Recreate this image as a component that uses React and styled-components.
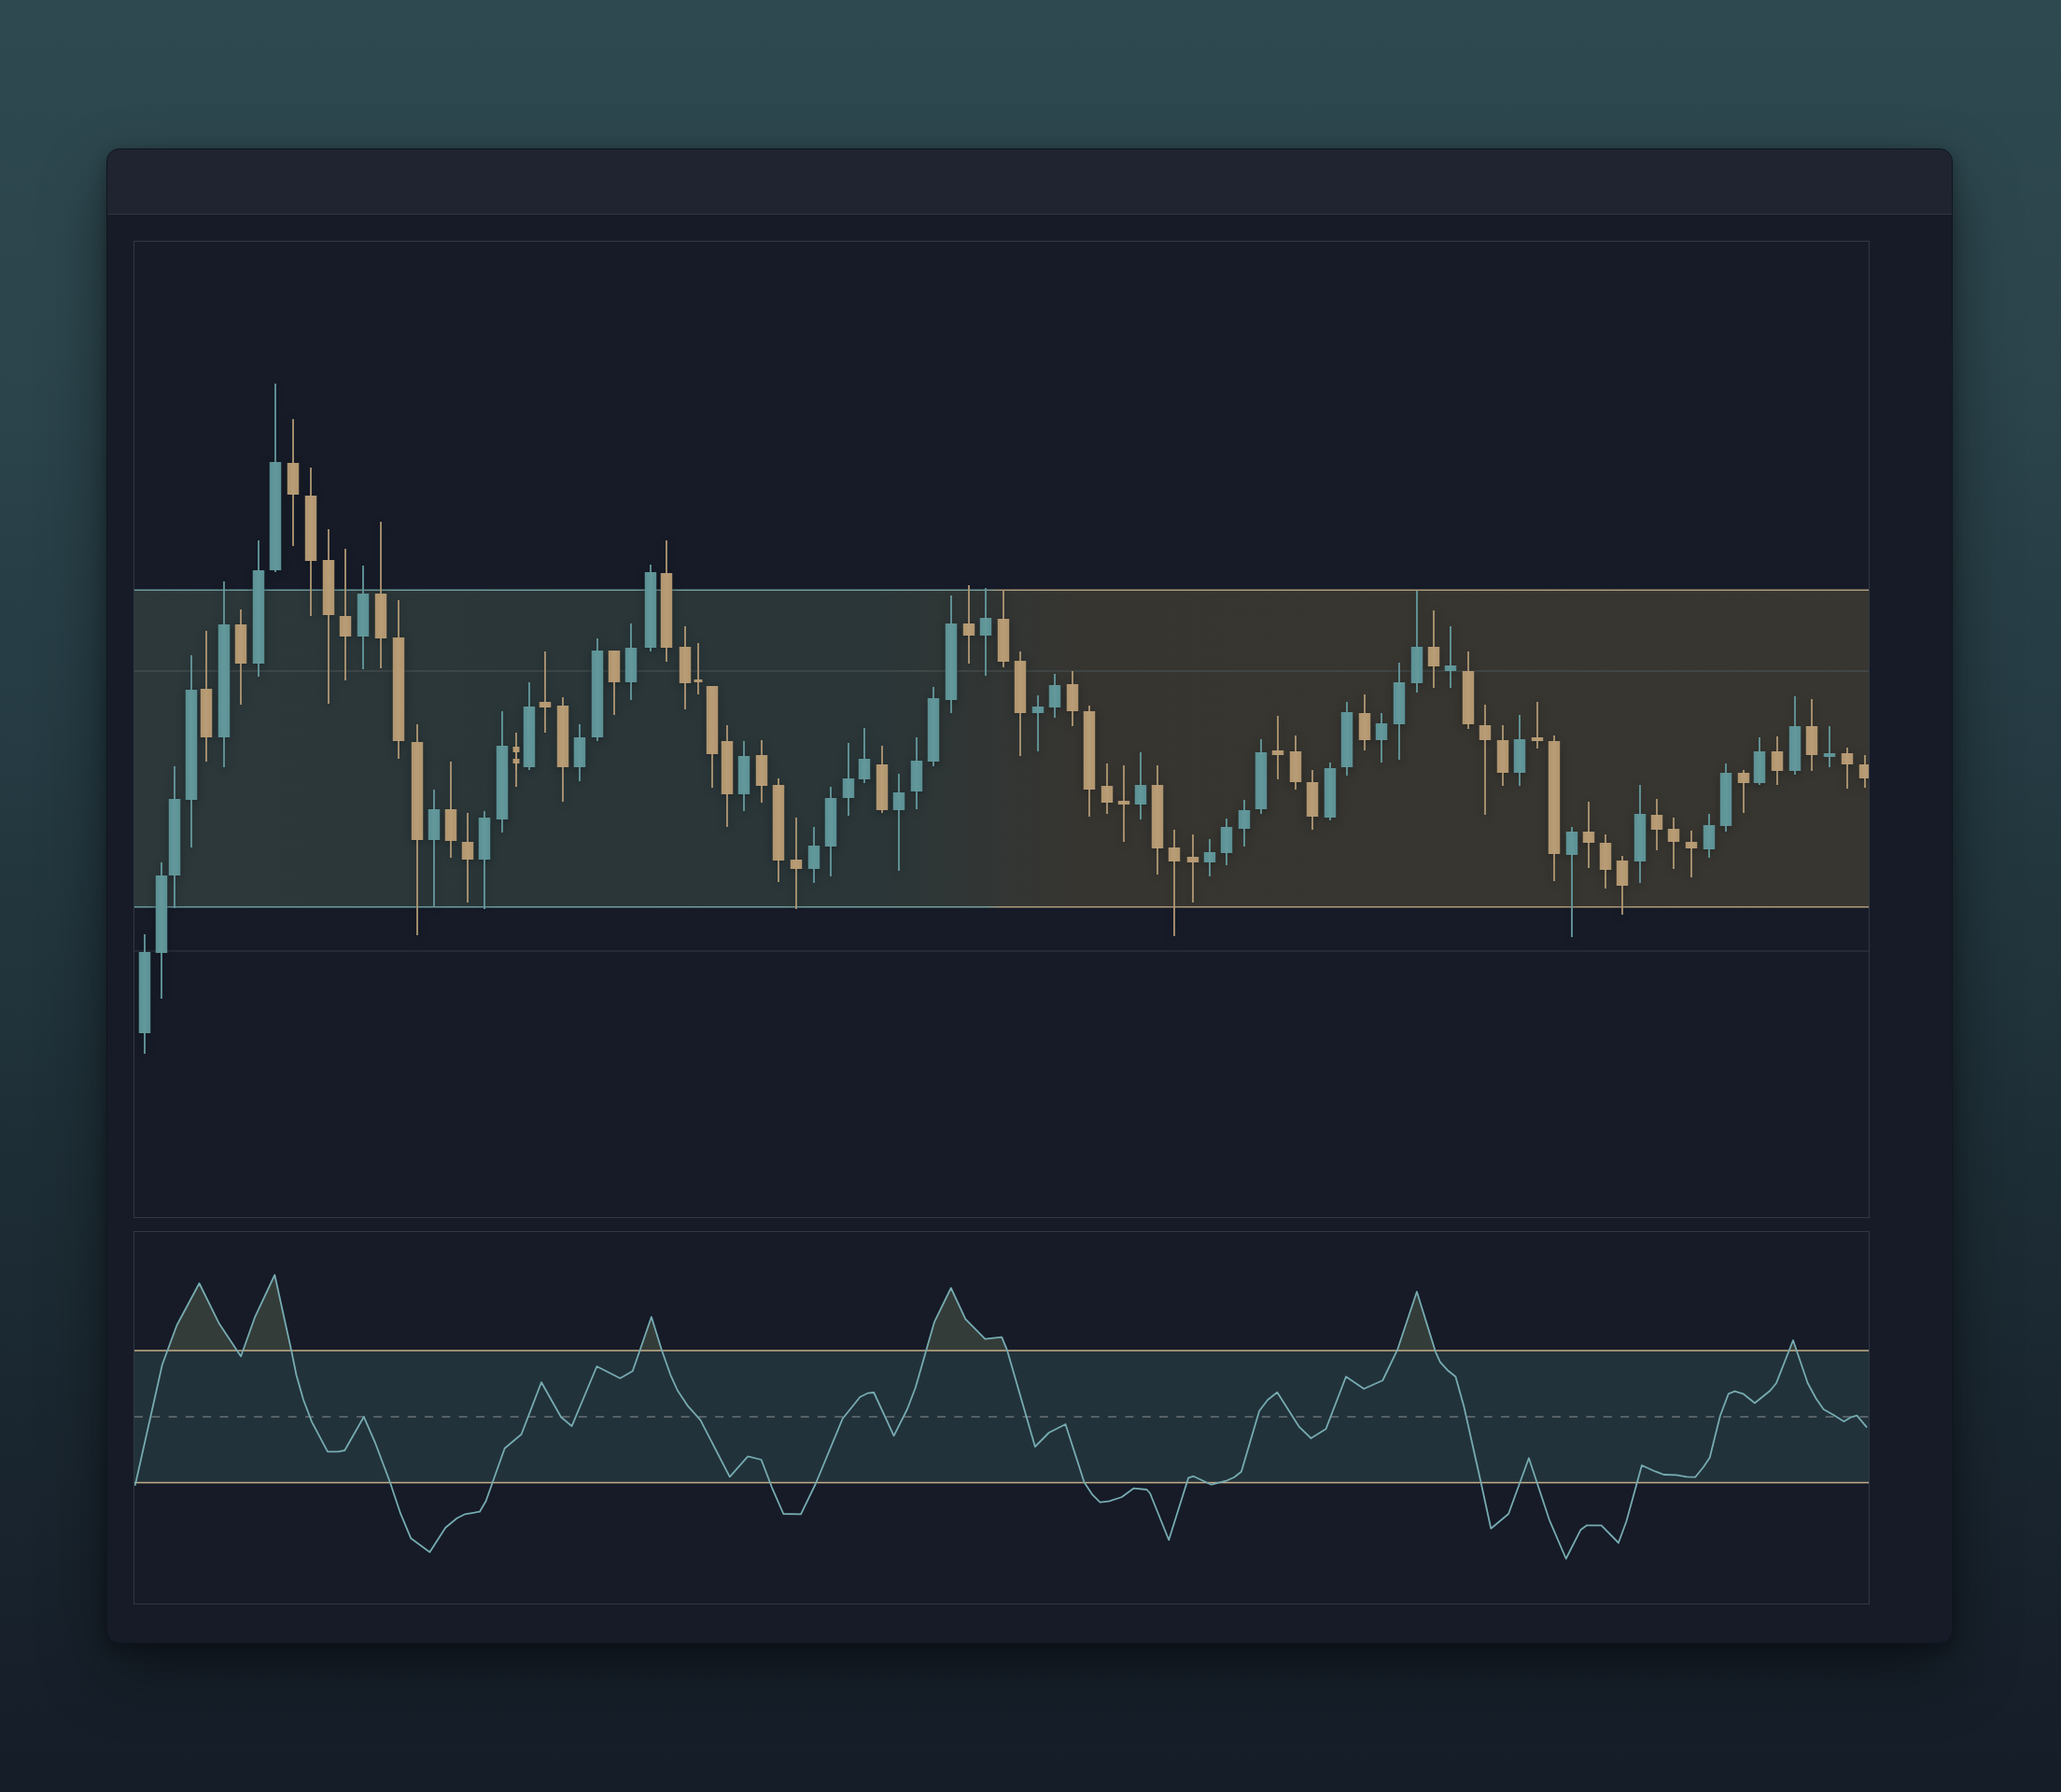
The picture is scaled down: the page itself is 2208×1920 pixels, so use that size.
import React from "react"
import styled, { createGlobalStyle } from "styled-components"

const GlobalStyle = createGlobalStyle`
  html, body {
    margin: 0;
    padding: 0;
    background: #151d28;
  }
`

// x, wick top, body top, body bottom, wick bottom, t = teal / o = tan, optional body width
const candles = [
  [155, 1001, 1020, 1107, 1129, "t"], [173, 924, 938, 1021, 1070, "t"], [187, 821, 856, 938, 973, "t"],
  [205, 702, 739, 857, 908, "t"], [221, 676, 738, 790, 816, "o"], [240, 623, 669, 790, 822, "t"],
  [258, 653, 669, 711, 755, "o"], [277, 579, 611, 711, 725, "t"], [295, 411, 495, 611, 613, "t"],
  [314, 449, 496, 530, 585, "o"], [333, 501, 531, 601, 660, "o"], [352, 567, 600, 659, 754, "o"],
  [370, 588, 660, 682, 729, "o"], [389, 606, 636, 682, 717, "t"], [408, 559, 636, 684, 716, "o"],
  [427, 643, 683, 794, 813, "o"], [447, 776, 795, 900, 1002, "o"], [465, 846, 867, 900, 971, "t"],
  [483, 816, 867, 901, 919, "o"], [501, 871, 902, 921, 967, "o"], [519, 869, 876, 921, 974, "t"],
  [538, 762, 799, 878, 892, "t"], [553, 785, 800, 806, 825, "o", 7], [553, 806, 813, 818, 843, "o", 7],
  [567, 731, 757, 822, 825, "t"], [584, 698, 752, 758, 785, "o"], [603, 747, 756, 822, 859, "o"],
  [621, 776, 790, 822, 837, "t"], [640, 684, 697, 790, 794, "t"], [658, 697, 697, 731, 766, "o"],
  [676, 668, 694, 731, 750, "t"], [697, 605, 613, 694, 698, "t"], [714, 579, 614, 694, 709, "o"],
  [734, 671, 693, 732, 760, "o"], [748, 689, 728, 731, 744, "o", 9], [763, 735, 735, 808, 844, "o"],
  [779, 777, 794, 851, 886, "o"], [797, 794, 810, 851, 869, "t"], [816, 793, 809, 842, 860, "o"],
  [834, 834, 841, 922, 945, "o"], [853, 876, 921, 931, 974, "o"], [872, 886, 906, 931, 946, "t"],
  [890, 843, 855, 907, 939, "t"], [909, 796, 834, 855, 874, "t"], [926, 780, 813, 835, 839, "t"],
  [945, 799, 819, 868, 871, "o"], [963, 829, 849, 868, 933, "t"], [982, 790, 815, 848, 867, "t"],
  [1000, 736, 748, 816, 821, "t"], [1019, 638, 668, 750, 764, "t"], [1038, 627, 668, 681, 711, "o"],
  [1056, 630, 662, 681, 724, "t"], [1075, 633, 663, 709, 715, "o"], [1093, 698, 708, 764, 810, "o"],
  [1112, 745, 757, 764, 805, "t"], [1130, 722, 734, 758, 769, "t"], [1149, 719, 733, 762, 778, "o"],
  [1167, 756, 762, 846, 875, "o"], [1186, 818, 842, 860, 872, "o"], [1204, 820, 858, 862, 902, "o"],
  [1222, 806, 841, 862, 878, "t"], [1240, 820, 841, 909, 937, "o"], [1258, 889, 908, 923, 1003, "o"],
  [1278, 894, 918, 924, 967, "o"], [1296, 899, 913, 924, 939, "t"], [1314, 877, 886, 914, 927, "t"],
  [1333, 857, 868, 888, 907, "t"], [1351, 792, 806, 867, 872, "t"], [1369, 767, 804, 809, 835, "o"],
  [1388, 788, 805, 838, 846, "o"], [1406, 825, 838, 875, 889, "o"], [1425, 817, 823, 876, 879, "t"],
  [1443, 752, 763, 822, 831, "t"], [1462, 744, 764, 793, 804, "o"], [1480, 764, 775, 793, 817, "t"],
  [1499, 710, 731, 776, 814, "t"], [1518, 633, 693, 732, 742, "t"], [1536, 654, 693, 714, 737, "o"],
  [1554, 671, 713, 719, 737, "t"], [1573, 698, 719, 776, 781, "o"], [1591, 755, 777, 793, 873, "o"],
  [1610, 777, 793, 828, 842, "o"], [1628, 766, 792, 828, 842, "t"], [1647, 752, 790, 794, 802, "o"],
  [1665, 788, 794, 915, 944, "o"], [1684, 886, 891, 916, 1004, "t"], [1702, 859, 891, 903, 930, "o"],
  [1720, 894, 903, 932, 952, "o"], [1738, 917, 922, 949, 980, "o"], [1757, 841, 872, 923, 946, "t"],
  [1775, 856, 873, 889, 911, "o"], [1793, 876, 888, 902, 931, "o"], [1812, 890, 902, 909, 940, "o"],
  [1831, 872, 884, 910, 919, "t"], [1849, 818, 828, 885, 891, "t"], [1868, 825, 828, 839, 871, "o"],
  [1885, 790, 805, 839, 841, "t"], [1904, 789, 805, 826, 841, "o"], [1923, 746, 778, 826, 830, "t"],
  [1941, 749, 778, 809, 826, "o"], [1960, 778, 807, 811, 822, "t"], [1979, 801, 807, 819, 845, "o"],
  [1998, 809, 819, 834, 844, "o"],
]

// oscillator traced in three stretches: [x offset, points], x at 2.24 scale, y at 3 scale from 1300
const traced = [
  [130, [[33, 875], [98, 487], [133, 360], [187, 225], [235, 355], [287, 460], [320, 335], [368, 198], [408, 440], [420, 520], [437, 600], [457, 670], [495, 766], [520, 766], [536, 762], [582, 654], [610, 740], [645, 865], [670, 965], [695, 1045], [740, 1089], [778, 1010], [805, 980], [825, 967], [860, 959], [875, 925], [920, 755], [960, 710], [1008, 543], [1055, 655], [1081, 684], [1141, 492], [1197, 530], [1227, 507], [1272, 333], [1297, 440], [1318, 520], [1335, 570], [1360, 620], [1390, 665], [1460, 847], [1503, 782]]],
  [800, [[5, 782], [35, 792], [60, 880], [88, 966], [130, 967], [165, 870], [230, 660], [272, 590], [290, 578], [305, 576], [353, 715], [385, 630], [405, 560], [450, 350], [490, 240], [525, 340], [572, 404], [612, 398], [625, 440], [692, 750], [725, 705], [765, 678], [810, 865], [830, 905], [848, 929], [870, 925], [900, 912], [928, 884], [960, 888], [968, 900], [1013, 1050], [1060, 850], [1072, 845], [1115, 872], [1150, 860], [1170, 848], [1187, 830], [1230, 635], [1250, 600], [1273, 575], [1325, 685], [1354, 723], [1390, 693], [1438, 525]]],
  [1450, [[25, 564], [70, 537], [105, 440], [152, 252], [197, 445], [208, 478], [225, 503], [245, 525], [265, 620], [305, 860], [330, 1013], [372, 966], [421, 787], [470, 985], [510, 1110], [545, 1018], [560, 1003], [595, 1003], [636, 1059], [655, 990], [692, 810], [725, 830], [745, 840], [775, 841], [800, 847], [820, 848], [840, 815], [855, 785], [880, 650], [900, 580], [915, 572], [935, 580], [963, 610], [1000, 570], [1015, 545], [1055, 408], [1090, 545], [1110, 595], [1128, 630], [1152, 648], [1177, 669], [1195, 655], [1208, 650], [1232, 688]]],
]

const rsi = traced.flatMap(([x0, pts]) => pts.map(([x, y]) => [x0 + x / 2.24, 1300 + y / 3]))
const rsiLine = rsi.map(([x, y]) => `${x.toFixed(1)},${y.toFixed(1)}`).join(" ")
const first = rsi[0][0].toFixed(1)
const last = rsi[rsi.length - 1][0].toFixed(1)

const Page = styled.div`
  box-sizing: border-box;
  width: 2208px;
  height: 1920px;
  padding: 159px 116px 0 114px;
  overflow: hidden;
  background: linear-gradient(180deg, #2f4951 0%, #2c454d 18%, #253a42 42%, #1d2d35 66%, #18222c 88%, #151d28 100%);
`

const Win = styled.div`
  box-sizing: border-box;
  height: 1602px;
  display: flex;
  flex-direction: column;
  border: 1px solid #10161e;
  border-radius: 14px;
  overflow: hidden;
  background: #161b27;
  box-shadow: 0 30px 70px rgba(0, 0, 0, 0.42), 0 4px 16px rgba(0, 0, 0, 0.28);
`

const TitleBar = styled.div`
  flex: none;
  height: 69px;
  background: #1f2430;
  border-bottom: 1px solid #2f3642;
`

const Content = styled.div`
  flex: 1;
  display: flex;
  flex-direction: column;
  gap: 14px;
  padding: 28px 88px 41px 28px;
`

const Panel = styled.div`
  box-sizing: border-box;
  height: ${(p) => p.$height}px;
  border: 1px solid #313846;
  background: #161b27;
`

const Plot = styled.svg`
  display: block;
  width: 100%;
  height: 100%;
  overflow: hidden;
`

const Candles = styled.g`
  filter: drop-shadow(0 2px 5px rgba(8, 12, 18, 0.4));
`

const Wick = styled.rect`
  fill: ${(p) => (p.$up ? "#649a9e" : "#b09774")};
`

const Body = styled.rect`
  fill: ${(p) => (p.$up ? "url(#bodyTeal)" : "url(#bodyTan)")};
`

const GridLine = styled.line`
  stroke: ${(p) => p.$color};
  stroke-width: 1.4;
`

const Trace = styled.polyline`
  fill: none;
  stroke: #76abb1;
  stroke-width: 1.8;
  stroke-linejoin: round;
`

const MainChart = () => (
  <Panel $height={1047}>
    <Plot viewBox="144 259 1858 1045">
      <defs>
        <linearGradient id="bandFill" gradientUnits="userSpaceOnUse" x1="144" x2="2002" y1="0" y2="0">
          <stop offset="0" stopColor="#2d383a" />
          <stop offset="0.25" stopColor="#2a3638" />
          <stop offset="0.43" stopColor="#2b3638" />
          <stop offset="0.55" stopColor="#373530" />
          <stop offset="1" stopColor="#383630" />
        </linearGradient>
        <linearGradient id="bandEdge" gradientUnits="userSpaceOnUse" x1="144" x2="2002" y1="0" y2="0">
          <stop offset="0" stopColor="#6a9c9e" />
          <stop offset="0.49" stopColor="#76a09c" />
          <stop offset="0.5" stopColor="#b09c7c" />
          <stop offset="1" stopColor="#b09c7c" />
        </linearGradient>
        <linearGradient id="bodyTeal" x1="0" x2="1" y1="0" y2="0">
          <stop offset="0" stopColor="#5a9094" />
          <stop offset="0.5" stopColor="#64999c" />
          <stop offset="1" stopColor="#5a9094" />
        </linearGradient>
        <linearGradient id="bodyTan" x1="0" x2="1" y1="0" y2="0">
          <stop offset="0" stopColor="#b0956e" />
          <stop offset="0.5" stopColor="#b99d76" />
          <stop offset="1" stopColor="#b0956e" />
        </linearGradient>
      </defs>

      <rect x="144" y="632" width="1858" height="340" fill="url(#bandFill)" />
      <rect x="144" y="631.5" width="1858" height="1.5" fill="url(#bandEdge)" />
      <rect x="144" y="971" width="1858" height="1.5" fill="url(#bandEdge)" />
      <GridLine x1="144" x2="2002" y1="719" y2="719" $color="#454c4c" />
      <GridLine x1="144" x2="2002" y1="1019" y2="1019" $color="#2b303c" />

      <Candles>
        {candles.map(([x, hi, top, bottom, lo, kind, w = 12.5], i) => (
          <g key={i}>
            <Wick x={x - 0.9} y={hi} width="1.8" height={lo - hi} $up={kind === "t"} />
            <Body x={x - w / 2} y={top} width={w} height={bottom - top} $up={kind === "t"} />
          </g>
        ))}
      </Candles>
    </Plot>
  </Panel>
)

const RsiChart = () => (
  <Panel $height={400}>
    <Plot viewBox="144 1320 1858 398">
      <defs>
        <clipPath id="overbought">
          <rect x="144" y="1320" width="1858" height="127" />
        </clipPath>
      </defs>

      <rect x="144" y="1447" width="1858" height="141" fill="#22323a" />
      <polygon clipPath="url(#overbought)" points={`${first},1447 ${rsiLine} ${last},1447`} fill="#343c39" />
      <GridLine x1="144" x2="2002" y1="1518" y2="1518" $color="#687276" strokeDasharray="9 9.3" />
      <rect x="144" y="1446.3" width="1858" height="1.5" fill="#c6ae88" />
      <rect x="144" y="1587.8" width="1858" height="1.5" fill="#c6ae88" />
      <Trace points={rsiLine} />
    </Plot>
  </Panel>
)

const App = () => (
  <>
    <GlobalStyle />
    <Page>
      <Win>
        <TitleBar />
        <Content>
          <MainChart />
          <RsiChart />
        </Content>
      </Win>
    </Page>
  </>
)

export default App
